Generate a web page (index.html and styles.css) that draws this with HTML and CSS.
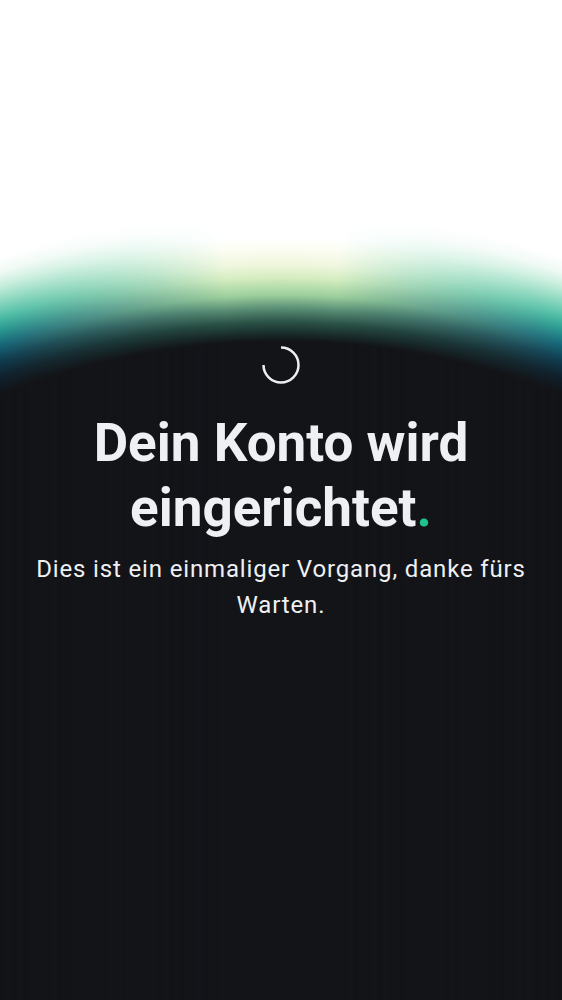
FILE: index.html
```html
<!DOCTYPE html>
<html lang="de">
<head>
<meta charset="utf-8">
<title>Dein Konto wird eingerichtet</title>
<link rel="stylesheet" href="styles.css">
</head>
<body>
<div class="screen">
  <main class="content">
    <svg class="spinner" width="40" height="40" viewBox="0 0 40 40" aria-hidden="true">
      <path d="M20 2.5 A17.5 17.5 0 1 1 2.5 20" fill="none" stroke="#eceef1" stroke-width="2.5"/>
    </svg>
    <h1 class="title">Dein Konto wird eingerichtet<span class="dot">.</span></h1>
    <p class="subtitle">Dies ist ein einmaliger Vorgang, danke fürs Warten.</p>
  </main>
</div>
</body>
</html>
```
FILE: styles.css
```css
html, body {
  margin: 0;
  padding: 0;
  background: #131418;
}

.screen {
  position: relative;
  min-height: 1000px;
  overflow: hidden;
  font-family: Roboto, "Noto Sans", sans-serif;
  background: radial-gradient(circle at 281px 1085px,
    #131418 746px,
    #10202c 761px,
    #0f3a4e 776px,
    #16687a 792px,
    #2a9a92 806px,
    #4bbca4 817px,
    #86d6bd 831px,
    #c8eedd 847px,
    #f0faf5 860px,
    #ffffff 874px);
}

.screen::before {
  content: "";
  position: absolute;
  inset: 0;
  background: radial-gradient(circle at 281px 1085px,
    #131418 744px,
    #1a2d2c 752px,
    #2a5246 763px,
    #5c9077 777px,
    #9ccf9c 790px,
    #d4ecc0 807px,
    #eef6dc 820px,
    #fcfdf2 836px,
    #ffffff 848px);
  -webkit-mask-image: linear-gradient(90deg, transparent 0%, rgba(0,0,0,0.5) 20%, #000 40%, #000 60%, rgba(0,0,0,0.5) 80%, transparent 100%);
  mask-image: linear-gradient(90deg, transparent 0%, rgba(0,0,0,0.5) 20%, #000 40%, #000 60%, rgba(0,0,0,0.5) 80%, transparent 100%);
}

.content {
  position: relative;
  display: flex;
  flex-direction: column;
  align-items: center;
  padding: 345px 24px 0;
  text-align: center;
}

.spinner {
  display: block;
  width: 40px;
  height: 40px;
}

.title {
  margin: 26px 0 0;
  font-size: 53px;
  line-height: 65px;
  font-weight: 700;
  color: #eef0f3;
  letter-spacing: 0;
}

.dot {
  color: #1ec48c;
}

.subtitle {
  margin: 10px 0 0;
  font-size: 24px;
  line-height: 36px;
  font-weight: 400;
  letter-spacing: 0.85px;
  color: #eef0f3;
}
```
